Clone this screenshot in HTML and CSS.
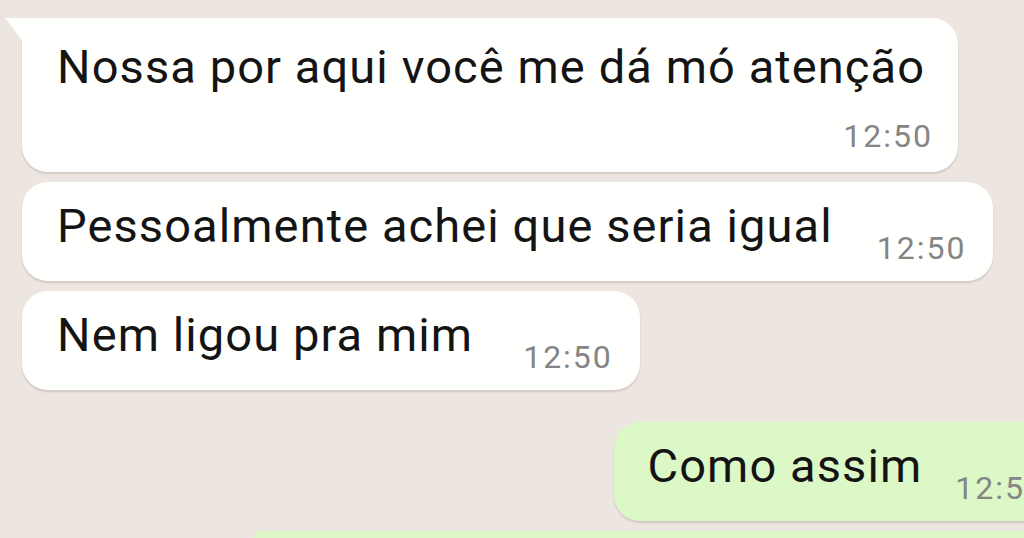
FILE: index.html
```html
<!DOCTYPE html>
<html lang="pt">
<head>
<meta charset="utf-8">
<link rel="stylesheet" href="styles.css">
</head>
<body>
<div class="chat">
  <div class="msg in first">
    <div class="text">Nossa por aqui você me dá mó atenção</div>
    <div class="time block">12:50</div>
  </div>
  <div class="msg in inline">
    <div class="text">Pessoalmente achei que seria igual</div>
    <div class="time">12:50</div>
  </div>
  <div class="msg in inline m3">
    <div class="text">Nem ligou pra mim</div>
    <div class="time">12:50</div>
  </div>
  <div class="msg out inline">
    <div class="text">Como assim</div>
    <div class="time">12:50</div>
  </div>
  <div class="msg out last"></div>
</div>
</body>
</html>
```
FILE: styles.css
```css
html, body {
  margin: 0;
  padding: 0;
  height: 100%;
  overflow: hidden;
}
body {
  background: #ede5df;
  font-family: Roboto, "Noto Sans", sans-serif;
  color: #141414;
}
.chat {
  display: flex;
  flex-direction: column;
  align-items: flex-start;
  padding: 18px 0 0 22px;
  gap: 10px;
}
.msg {
  position: relative;
  background: #fffffe;
  border-radius: 26px;
  box-shadow: 0 2px 2px rgba(0, 0, 0, 0.12);
}
.msg .text {
  font-size: 47px;
  letter-spacing: 1.1px;
  line-height: 54px;
  white-space: nowrap;
}
.time {
  font-size: 32px;
  letter-spacing: 2px;
  line-height: 30px;
  color: #858585;
  white-space: nowrap;
}
.first {
  border-top-left-radius: 0;
  padding: 22px 25px 21px 35px;
  width: 876px;
  display: flex;
  flex-direction: column;
}
.first::before {
  content: "";
  position: absolute;
  left: -17px;
  top: 0;
  width: 0;
  height: 0;
  border-top: 22px solid #fffffe;
  border-left: 17px solid transparent;
}
.first .time.block {
  align-self: flex-end;
  margin-top: 27px;
}
.inline {
  display: flex;
  align-items: flex-end;
  padding: 17px 27px 28px 35px;
  gap: 44px;
}
.inline .time {
  margin-bottom: -10px;
}
.m3 { gap: 50px; }
.out {
  background: #dcf8c7;
  align-self: flex-end;
}
.out.inline {
  margin-top: 22px;
  padding-left: 34px;
  gap: 33px;
  margin-right: -48px;
}
.out.last {
  width: 820px;
  height: 8px;
  border-bottom-left-radius: 0;
  border-bottom-right-radius: 0;
  margin-right: -50px;
}
```
